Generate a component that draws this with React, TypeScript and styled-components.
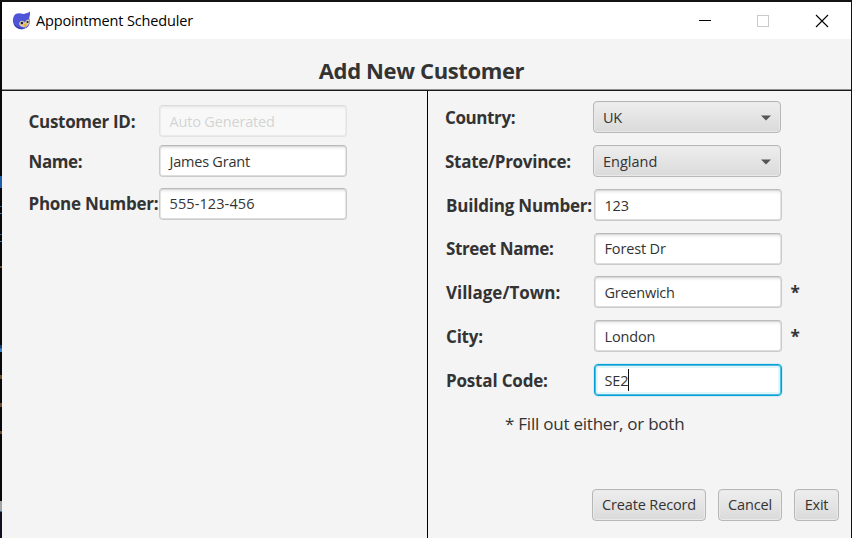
import React from "react";
import styled, { createGlobalStyle, css } from "styled-components";

const GlobalStyle = createGlobalStyle`
  *, *::before, *::after { box-sizing: border-box; }
  body {
    margin: 0;
    overflow: hidden;
    background: #141214;
    font-family: "Open Sans", "Noto Sans", sans-serif;
    color: #333;
  }
`;

const Desktop = styled.div`
  display: grid;
  grid-template-columns: 2px 1fr 1px;
  height: 538px;
  padding-top: 2px;
  background: #141214;
`;

/* Sliver of the code editor that shows behind the window. */
const EditorEdge = styled.div`
  background: linear-gradient(
    #08080a 0 174px, #1f5ead 174px 186px, #08080a 186px 204px,
    #2c5d96 204px 205px, #08080a 205px 211px, #3a78bd 211px 212px,
    #08080a 212px 232px, #2c5d96 232px 233px, #08080a 233px 239px,
    #3a78bd 239px 240px, #08080a 240px 264px, #6b4a2b 264px 266px,
    #08080a 266px 343px, #16406f 343px 346px, #3a86cc 347px 350px,
    #08080a 350px 373px, #6b4a2b 373px 377px, #08080a 377px 401px,
    #6b4a2b 401px 405px, #08080a 405px 429px, #6b4a2b 429px 432px,
    #08080a 432px 499px, #a3a3a3 499px 509px, #2b6ba8 509px 510px,
    #150d22 510px 100%
  );
`;

const Window = styled.div`
  display: flex;
  flex-direction: column;
  min-width: 0;
  background: #f4f4f4;
`;

const TitleBar = styled.header`
  display: flex;
  align-items: center;
  height: 37px;
  padding: 0 11px 0 10px;
  background: #fff;
`;

const AppTitle = styled.span`
  flex: 1;
  margin-left: 4px;
  font-size: 14.5px;
  letter-spacing: -0.15px;
  line-height: 37px;
  color: #000;
`;

const WindowControls = styled.div`
  display: flex;
  gap: 22px;
  height: 36px;
`;

const Heading = styled.h1`
  height: 52px;
  margin: 0;
  padding-right: 10px;
  border-bottom: 1px solid #1c191c;
  box-shadow: inset 0 -1px #8f8f8f;
  font-size: 22px;
  font-weight: 700;
  letter-spacing: -0.37px;
  line-height: 62px;
  text-align: center;
`;

const Columns = styled.main`
  display: grid;
  grid-template-columns: 425px 1fr;
  flex: 1;
`;

const CustomerPanel = styled.section`
  display: flex;
  flex-direction: column;
  padding: 14px 0 0 26.5px;
`;

const AddressPanel = styled.section`
  display: flex;
  flex-direction: column;
  padding: 10px 12px 17px 17px;
  border-left: 1px solid #000;
`;

const Row = styled.div<{ $gap: number; $labelWidth: number; $indent?: number }>`
  display: grid;
  grid-template-columns: ${(p) => p.$labelWidth}px auto 1fr;
  align-items: center;
  height: 32px;
  margin-bottom: ${(p) => p.$gap}px;
  padding-left: ${(p) => p.$indent ?? 0}px;
`;

const Label = styled.label<{ $tracking?: number; $high?: boolean }>`
  height: 32px;
  font-size: 17px;
  font-weight: 700;
  letter-spacing: ${(p) => p.$tracking ?? 0}px;
  line-height: ${(p) => (p.$high ? 32 : 34)}px;
  white-space: nowrap;
`;

const control = css<{ $tracking?: number }>`
  display: flex;
  align-items: center;
  height: 32px;
  border-radius: 4px;
  font-size: 14.5px;
  line-height: 28px;
  letter-spacing: ${(p) => p.$tracking ?? 0}px;
  white-space: nowrap;
`;

const Field = styled.div<{
  $focused?: boolean;
  $disabled?: boolean;
  $tracking?: number;
  $high?: boolean;
}>`
  ${control}
  width: 188px;
  padding: ${(p) => (p.$high ? 0 : 2)}px 0 0 9.5px;
  border: 1px solid #cbcbcb;
  border-top-color: #bababa;
  background: #fff;
  box-shadow: inset 0 1px #d9d9d9, inset 0 3px 3px -1px #e6e6e6, inset 1px 0 #e4e4e4,
    inset -1px 0 #e4e4e4, inset 0 -1px #ddd;
  ${(p) =>
    p.$disabled &&
    css`
      color: #a4a4a4;
      opacity: 0.4;
    `}
  ${(p) =>
    p.$focused &&
    css`
      border-color: #039ed3;
      box-shadow: inset 0 0 0 1px #4fbde1, inset 0 0 0 3px #e2f5fb, 0 0 0 1px #d3edf5;
    `}
`;

const Caret = styled.span`
  width: 1px;
  height: 22px;
  margin: -2px 0 0 -0.5px;
  background: #111;
`;

const raised = css`
  ${control}
  border: 1px solid #b7b7b7;
  background: linear-gradient(#eeeeee, #dadada);
  box-shadow: inset 0 0 0 1px #e9e9e9;
`;

const Combo = styled.div<{ $tracking?: number }>`
  ${raised}
  justify-content: space-between;
  width: 188px;
  padding: 2px 9px 0 9px;
`;

const Required = styled.span`
  margin-left: 8.5px;
  font-size: 17px;
  font-weight: 700;
`;

const Note = styled.p`
  margin: 0;
  padding-left: 60px;
  font-size: 17px;
  line-height: 25px;
  letter-spacing: -0.23px;
`;

const Actions = styled.div`
  display: flex;
  justify-content: flex-end;
  gap: 12px;
  margin-top: auto;
`;

const Button = styled.button<{ $width: number; $tracking?: number }>`
  ${raised}
  justify-content: center;
  width: ${(p) => p.$width}px;
  padding: 0;
  color: #333;
  font-family: inherit;
`;

const Owl = () => (
  <svg width="20" height="20" viewBox="0 0 20 20">
    <path
      d="M3.6 2.9 Q6 1.9 9 2.4 Q12 3.4 14 2.3 Q16 2 18 .5 Q18.3 4 17.2 7 Q18.6 10 17.3 13.5 Q15.5 17.8 10 18.4 Q4 18 2 14 Q0 9.6 1.6 5.8 Q2.2 4 3.6 2.9 Z"
      fill="#4f55d8"
    />
    <path d="M1.9 12.5 Q5 16.5 11 17 Q9 18.8 5.4 17 Q2.6 15.3 1.9 12.5" fill="#3a3ea6" />
    <path d="M8 10.4 Q10 8.8 12.8 11.2 Q14.5 8.2 17.2 8.2 Q18 11 16.6 13.6 Q14.5 16.6 11.5 16.2 Q7.4 15.4 7 12.4 Z" fill="#d6c9a4" />
    <circle cx="9.9" cy="12" r="1.3" fill="#23203d" />
    <circle cx="15.6" cy="11" r="1.1" fill="#23203d" />
    <path d="M11.5 13 L14.7 12.6 L13.3 17.4 Z" fill="#f5ab28" />
  </svg>
);

const Minimize = () => (
  <svg width="36" height="36" viewBox="0 0 36 36">
    <path d="M11 17.5h12" stroke="#000" />
  </svg>
);

const Maximize = () => (
  <svg width="36" height="36" viewBox="0 0 36 36">
    <rect x="11.5" y="12.5" width="11" height="11" fill="none" stroke="#cacaca" />
  </svg>
);

const Close = () => (
  <svg width="36" height="36" viewBox="0 0 36 36">
    <path d="M12 12l12 12M24 12L12 24" stroke="#000" strokeWidth="1.1" />
  </svg>
);

const Arrow = () => (
  <svg width="10" height="6" viewBox="0 0 10 6">
    <path d="M0 .5h10L5 5.5z" fill="#555" />
  </svg>
);

const customerRows = [
  { label: "Customer ID:", value: "Auto Generated", gap: 8, tracking: -0.3, valueTracking: -0.17, disabled: true, high: false },
  { label: "Name:", value: "James Grant", gap: 11, tracking: -0.4, valueTracking: -0.22, disabled: false, high: false },
  { label: "Phone Number:", value: "555-123-456", gap: 0, tracking: -0.25, valueTracking: 0.1, disabled: false, high: true },
];

const addressRows = [
  { label: "Building Number:", value: "123", gap: 12, tracking: -0.2, valueTracking: -0.2, required: false, high: false },
  { label: "Street Name:", value: "Forest Dr", gap: 11, tracking: -0.38, valueTracking: -0.15, required: false, high: true },
  { label: "Village/Town:", value: "Greenwich", gap: 12, tracking: -0.02, valueTracking: -0.25, required: true, high: false },
  { label: "City:", value: "London", gap: 12, tracking: -0.2, valueTracking: -0.15, required: true, high: false },
];

export default function App() {
  return (
    <>
      <GlobalStyle />
      <Desktop>
        <EditorEdge />
        <Window>
          <TitleBar>
            <Owl />
            <AppTitle>Appointment Scheduler</AppTitle>
            <WindowControls>
              <Minimize />
              <Maximize />
              <Close />
            </WindowControls>
          </TitleBar>
          <Heading>Add New Customer</Heading>
          <Columns>
            <CustomerPanel>
              {customerRows.map((r) => (
                <Row key={r.label} $gap={r.gap} $labelWidth={130.5}>
                  <Label $tracking={r.tracking} $high={r.high}>
                    {r.label}
                  </Label>
                  <Field $disabled={r.disabled} $tracking={r.valueTracking} $high={r.high}>
                    {r.value}
                  </Field>
                </Row>
              ))}
            </CustomerPanel>
            <AddressPanel>
              <Row $gap={12} $labelWidth={148}>
                <Label $tracking={-0.4}>Country:</Label>
                <Combo $tracking={-0.3}>
                  UK
                  <Arrow />
                </Combo>
              </Row>
              <Row $gap={12} $labelWidth={148}>
                <Label $tracking={-0.28}>State/Province:</Label>
                <Combo>
                  England
                  <Arrow />
                </Combo>
              </Row>
              {addressRows.map((r) => (
                <Row key={r.label} $gap={r.gap} $labelWidth={148} $indent={1}>
                  <Label $tracking={r.tracking} $high={r.high}>
                    {r.label}
                  </Label>
                  <Field $tracking={r.valueTracking} $high={r.high}>
                    {r.value}
                  </Field>
                  {r.required && <Required>*</Required>}
                </Row>
              ))}
              <Row $gap={15} $labelWidth={148} $indent={1}>
                <Label $tracking={-0.18}>Postal Code:</Label>
                <Field $focused $tracking={-0.1}>
                  SE2
                  <Caret />
                </Field>
              </Row>
              <Note>* Fill out either, or both</Note>
              <Actions>
                <Button $width={114} $tracking={-0.13}>Create Record</Button>
                <Button $width={64} $tracking={-0.13}>Cancel</Button>
                <Button $width={45} $tracking={-0.25}>Exit</Button>
              </Actions>
            </AddressPanel>
          </Columns>
        </Window>
      </Desktop>
    </>
  );
}
